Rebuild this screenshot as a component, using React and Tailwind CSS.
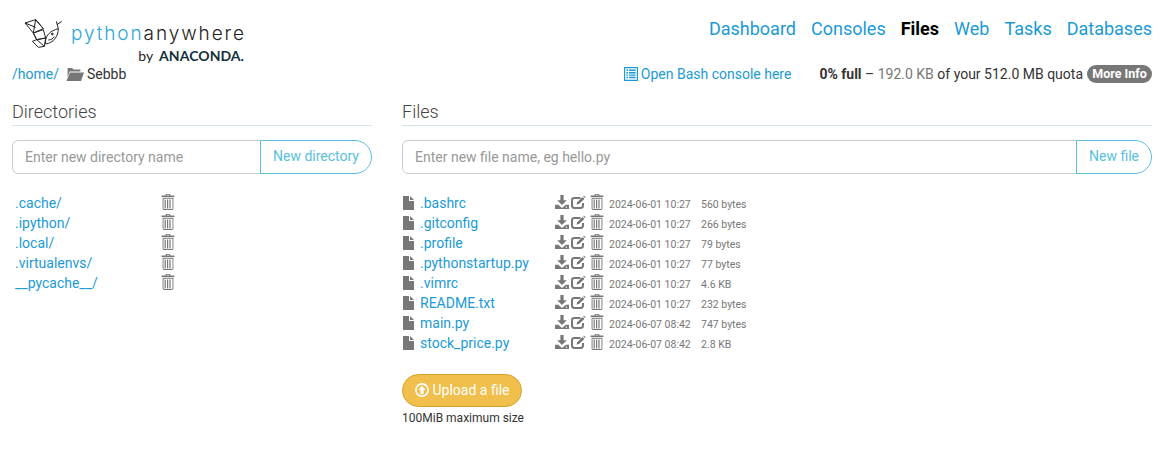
function TrashIcon() {
  return (
    <svg viewBox="0 0 14 16" width="14" height="16" fill="#777">
      <path d="M5 0h4l.6 1.4h3.8v1.6H.6V1.4h3.8L5 0zM5.6 .8h2.8l-.2.6H5.8L5.6 .8z" fillRule="evenodd" />
      <path d="M1.6 3.8h10.8v10.8c0 .8-.6 1.4-1.4 1.4H3c-.8 0-1.4-.6-1.4-1.4V3.8zm.9 .9v9.9c0 .3.2.5.5.5h8c.3 0 .5-.2.5-.5V4.7H2.5zM3.6 5.4h1.2v9H3.6zM6 5.4h1.2v9H6zM8.4 5.4h1.2v9H8.4z" fillRule="evenodd" />
    </svg>
  );
}

function FileIcon() {
  return (
    <svg viewBox="0 0 11 14" width="11" height="14" fill="#777">
      <path d="M0 0h6v5h5v9H0V0zM7 0l4 4H7V0z" />
    </svg>
  );
}

function DownloadIcon() {
  return (
    <svg viewBox="0 0 14 14" width="14" height="14" fill="#777">
      <path d="M5.4 0h3.2v5.2h3.2L7 10 2.2 5.2h3.2V0z" />
      <path d="M0 9.8h3.2L7 13l3.8-3.2H14V14H0V9.8z" />
      <rect x="10.8" y="11.6" width="1.2" height="1.2" fill="#fff" />
    </svg>
  );
}

function EditIcon() {
  return (
    <svg viewBox="0 0 15 14" width="15" height="14" fill="none">
      <path d="M12 8v2.6c0 1.5-.9 2.4-2.4 2.4H3.4C1.9 13 1 12.1 1 10.6V5.4C1 3.9 1.9 3 3.4 3H9.5" stroke="#777" strokeWidth="2" />
      <path d="M5.6 9.6l.5-2.4 5.4-5.2 1.9 1.9-5.4 5.2-2.4.5z" fill="#777" />
      <path d="M12.2 1.2l.7-.7 1.7 1.7-.7.7z" fill="#777" />
    </svg>
  );
}

function ListIcon() {
  return (
    <svg viewBox="0 0 14 14" width="14" height="14" fill="#1b9ad6">
      <path d="M0 0h14v14H0V0zm1.2 1.2v11.6h11.6V1.2H1.2z" fillRule="evenodd" />
      <path d="M2.4 2.6h1.6v1.4H2.4zM5 2.6h6.6v1.4H5zM2.4 5h1.6v1.4H2.4zM5 5h6.6v1.4H5zM2.4 7.4h1.6v1.4H2.4zM5 7.4h6.6v1.4H5zM2.4 9.8h1.6v1.4H2.4zM5 9.8h6.6v1.4H5z" />
    </svg>
  );
}

function FolderOpenIcon() {
  return (
    <svg viewBox="0 0 18 13" width="18" height="13" fill="#777">
      <path d="M1.6 0h4.6l1.2 1.6h7v2H3.6L1.6 9.4V0.6z" />
      <path d="M4 4.6h14L15 13H.4L4 4.6z" />
    </svg>
  );
}

function UploadIcon() {
  return (
    <svg viewBox="0 0 14 14" width="14" height="14">
      <circle cx="7" cy="7" r="6.1" fill="none" stroke="#fff" strokeWidth="1.6" />
      <path d="M7 2.8L10.6 6.8H8.6V11H5.4V6.8H3.4L7 2.8z" fill="#fff" />
    </svg>
  );
}

function Logo() {
  return (
    <svg viewBox="27 33 120 90" width="40" height="30" fill="none" stroke="#222" strokeWidth="3" strokeLinejoin="round">
      <path d="M30 45L62 35L85 62L55 75ZM62 35L55 75M30 45L62 58M62 35L85 62" />
      <path d="M55 75L85 65L92 90L65 95ZM55 75L65 95M65 95L92 90L88 115ZM65 95L52 100L70 118L88 115" />
      <path d="M92 108C88 85 105 68 130 62C130 85 115 105 92 108Z" />
      <path d="M130 62L124 40M126 50L140 40" />
      <circle cx="112" cy="78" r="2.5" fill="#222" />
      <path d="M100 96C108 96 114 92 118 86" />
    </svg>
  );
}

function PanelHeading({ children }) {
  return (
    <h2 className="text-[18px] leading-[20px] font-light text-[#444] pb-[3px] border-b border-[#d3e3ea]">{children}</h2>
  );
}

function InputRow({ placeholder, button, buttonWidth }) {
  return (
    <div className="flex h-[34px] mt-[14px]">
      <div className="flex-1 flex items-center pl-3 border border-[#ccc] rounded-l-[6px] text-[14px] text-[#999] bg-white">
        {placeholder}
      </div>
      <div className={`${buttonWidth} flex items-center justify-center pb-[2px] border border-[#5bc0de] rounded-r-[17px] -ml-px text-[14px] text-[#5bc0de] bg-white`}>
        {button}
      </div>
    </div>
  );
}

const dirs = [".cache/", ".ipython/", ".local/", ".virtualenvs/", "__pycache__/"];
const files = [
  [".bashrc", "2024-06-01 10:27", "560 bytes"],
  [".gitconfig", "2024-06-01 10:27", "266 bytes"],
  [".profile", "2024-06-01 10:27", "79 bytes"],
  [".pythonstartup.py", "2024-06-01 10:27", "77 bytes"],
  [".vimrc", "2024-06-01 10:27", "4.6 KB"],
  ["README.txt", "2024-06-01 10:27", "232 bytes"],
  ["main.py", "2024-06-07 08:42", "747 bytes"],
  ["stock_price.py", "2024-06-07 08:42", "2.8 KB"],
];

export default function App() {
  return (
    <div className="h-[450px] w-[1165px] overflow-hidden bg-white pl-3 pr-[13px] text-[14px] text-[#333]" style={{ fontFamily: "Roboto, sans-serif" }}>
      <header className="flex justify-between h-[66px]">
        <div className="pl-[12px] pt-[19px] w-[260px]">
          <div className="flex items-center h-[30px]">
            <Logo />
            <span className="ml-[7px] text-[19px] leading-[30px] tracking-[1.9px] font-light whitespace-nowrap" style={{ fontFamily: "Inter, sans-serif" }}>
              <span className="text-[#2ea3dc]">python</span><span className="text-[#222]">anywhere</span>
            </span>
          </div>
          <div className="flex justify-end items-baseline pr-[28px] -mt-px text-[#12303a] leading-[16px]" style={{ fontFamily: "Lato, sans-serif" }}>
            <span className="text-[14px] mr-[6px] text-[#222]">by</span>
            <span className="text-[14px] font-bold tracking-[0.05px]">ANACONDA.</span>
          </div>
        </div>
        <nav className="flex gap-[15px] pt-[17px] text-[18px] leading-[24px] text-[#1b9ad6]">
          <a>Dashboard</a>
          <a>Consoles</a>
          <a className="font-bold text-black">Files</a>
          <a>Web</a>
          <a>Tasks</a>
          <a>Databases</a>
        </nav>
      </header>

      <div className="flex justify-between items-center h-[16px]">
        <div className="flex items-center">
          <span className="text-[#1b9ad6]">/home/</span>
          <span className="ml-[7px] mr-[3px]"><FolderOpenIcon /></span>
          <span>Sebbb</span>
        </div>
        <div className="flex items-center">
          <span className="flex items-center gap-[3px] text-[#1b9ad6]"><ListIcon />Open Bash console here</span>
          <span className="ml-[28px]"><b className="font-bold">0% full</b> – <span className="text-[#777]">192.0 KB</span> of your 512.0 MB quota</span>
          <span className="ml-[4px] h-[18px] w-[65px] flex items-center justify-center rounded-full bg-[#777] text-white text-[12.5px] font-bold">More Info</span>
        </div>
      </div>

      <div className="grid grid-cols-[360px_750px] gap-[30px] mt-[20px]">
        <section>
          <PanelHeading>Directories</PanelHeading>
          <InputRow placeholder="Enter new directory name" button="New directory" buttonWidth="w-[112px]" />
          <ul className="mt-[19px]">
            {dirs.map((d) => (
              <li key={d} className="flex items-center h-[20px] pl-[3px]">
                <a className="w-[146px] text-[#1b9ad6]">{d}</a>
                <span className="-translate-y-px flex"><TrashIcon /></span>
              </li>
            ))}
          </ul>
        </section>
        <section>
          <PanelHeading>Files</PanelHeading>
          <InputRow placeholder="Enter new file name, eg hello.py" button="New file" buttonWidth="w-[76px]" />
          <ul className="mt-[19px]">
            {files.map(([name, date, size]) => (
              <li key={name} className="flex items-center h-[20px] pl-[1px]">
                <span className="w-[17px] flex"><FileIcon /></span>
                <a className="w-[135px] text-[#1b9ad6]">{name}</a>
                <span className="flex items-center w-[54px] -translate-y-px">
                  <DownloadIcon />
                  <span className="ml-[2px] flex"><EditIcon /></span>
                  <span className="ml-[4px] flex"><TrashIcon /></span>
                </span>
                <span className="w-[92px] pt-[3px] text-[10.5px] text-[#777] whitespace-nowrap">{date}</span>
                <span className="pt-[3px] text-[10.5px] text-[#777] whitespace-nowrap">{size}</span>
              </li>
            ))}
          </ul>
          <div className="mt-[21px] w-[120px] h-[33px] pb-px flex items-center justify-center gap-[4px] rounded-full bg-[#f0bf4c] border border-[#d6a02c] text-white text-[14px]">
            <UploadIcon />
            Upload a file
          </div>
          <p className="mt-[3px] text-[12px] leading-[17px] text-[#333]">100MiB maximum size</p>
        </section>
      </div>
    </div>
  );
}
